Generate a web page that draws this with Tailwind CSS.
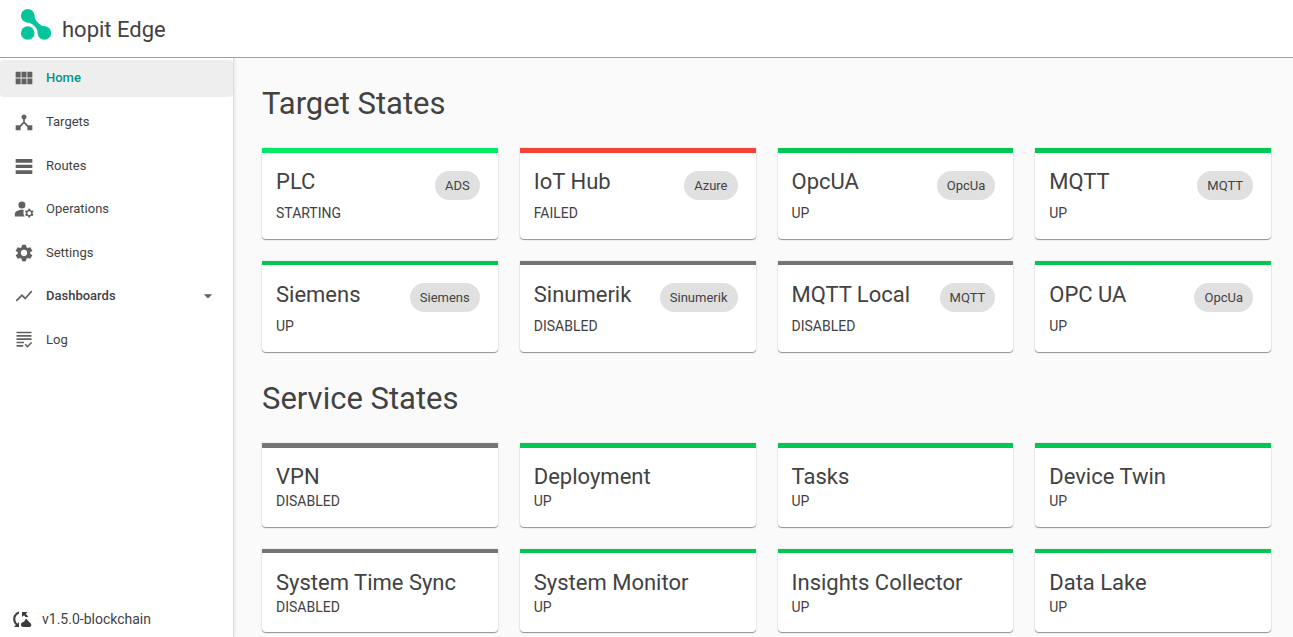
<!DOCTYPE html>
<html lang="en">
<head>
  <meta charset="UTF-8">
  <meta name="viewport" content="width=device-width, initial-scale=1.0">
  <title>hopit Edge</title>
  <script src="https://cdn.jsdelivr.net/npm/@tailwindcss/browser@4"></script>
</head>
<body class="flex min-h-screen flex-col bg-[#fafafa] font-[Roboto,sans-serif] text-[#424242]">
  <header class="relative z-10 flex h-[58px] shrink-0 items-center gap-[10px] border-b border-[#a0a0a0] bg-white pl-5">
    <svg class="mb-2 size-8 shrink-0" viewBox="0 0 32 32" fill="#06c59c" aria-hidden="true">
      <circle cx="7.7" cy="6.8" r="6.8"/>
      <circle cx="7.7" cy="24" r="6.8"/>
      <circle cx="24.4" cy="24" r="6.8"/>
      <path d="M14.4 5.9C14.4 10.9 17.5 13.200 20.2 15.400C22 16.900 23.5 17.200 25.5 17.300L18 25.400C17.8 21.900 17 19.900 14.8 17.500C12.4 15 10.8 13.700 6.5 13.500Z"/>
    </svg>
    <span class="pt-[2px] text-[22px]">hopit Edge</span>
  </header>

  <div class="flex grow">
    <aside class="flex w-[234px] shrink-0 flex-col border-r border-[#dcdcdc] bg-white shadow-[1px_0_3px_rgba(0,0,0,0.08)]">
      <nav class="flex flex-col gap-[7px] pt-[2px] text-[13px]">
        <a href="#" class="flex h-[37px] items-center gap-3 rounded bg-[#eeeeee] pb-[2px] pl-[14px] font-medium text-[#009688]" aria-current="page">
          <svg class="size-5 shrink-0" viewBox="0 0 24 24" fill="#616161"><path d="M2 4.500h6v7H2zM9 4.500h6v7H9zM16 4.500h6v7h-6zM2 12.500h6v7H2zM9 12.500h6v7H9zM16 12.500h6v7h-6z"/></svg>
          Home
        </a>
        <a href="#" class="flex h-[37px] items-center gap-3 pb-[2px] pl-[14px]">
          <svg class="size-5 shrink-0" viewBox="0 0 24 24" fill="#616161"><path d="M17 16l-4-4V8.82C14.16 8.4 15 7.3 15 6c0-1.66-1.34-3-3-3S9 4.34 9 6c0 1.3.84 2.4 2 2.82V12l-4 4H2v6h6v-4.05l4-4.2 4 4.2V22h6v-6z"/></svg>
          Targets
        </a>
        <a href="#" class="flex h-[37px] items-center gap-3 pb-[2px] pl-[14px]">
          <svg class="size-5 shrink-0" viewBox="0 0 24 24" fill="#616161"><path d="M2 3.500h20v4.500H2zM2 10.500h20v4H2zM2 17h20v4.500H2z"/></svg>
          Routes
        </a>
        <a href="#" class="flex h-[37px] items-center gap-3 pb-[3px] pl-[14px]">
          <svg class="size-5 shrink-0" viewBox="0 0 24 24" fill="#616161"><circle cx="9.5" cy="7.3" r="4.2"/><path d="M11.8 13.1C10.9 13 10.2 13 9.5 13c-2.4 0-4.700.7-6.600 1.800C1.700 15.500 1 16.800 1 18.200V21h11.700c-1.600-2.300-1.700-5.300-.900-7.900z"/><path fill-rule="evenodd" d="M22.300 17c0-.2 0-.4-.1-.6l1.200-1-1.100-1.900-1.500.5c-.3-.3-.7-.5-1.100-.7L19.400 11.800h-2.200l-.3 1.500c-.4.2-.8.4-1.100.700l-1.500-.5-1.100 1.900 1.200 1c0 .2-.1.4-.1.600s0 .4.100.600l-1.200 1 1.100 1.900 1.500-.5c.3.3.7.5 1.100.700l.3 1.500h2.200l.3-1.500c.4-.2.8-.4 1.100-.700l1.500.5 1.100-1.900-1.200-1c.1-.2.1-.4.100-.600zm-4 2.200a2.200 2.200 0 1 1 0-4.400 2.200 2.200 0 0 1 0 4.400z"/></svg>
          Operations
        </a>
        <a href="#" class="flex h-[37px] items-center gap-3 pb-[3px] pl-[14px]">
          <svg class="size-5 shrink-0" viewBox="0 0 24 24" fill="#616161"><path d="M19.430 12.980c.040-.320.070-.640.070-.980s-.030-.660-.070-.980l2.610-1.650-2.500-4.330-2.990 1c-.520-.400-1.080-.730-1.690-.980L14.400 2h-4.800l-.460 3.060c-.610.250-1.170.590-1.690.980l-2.990-1-2.500 4.330 2.610 1.650c-.040.320-.070.650-.070.980s.030.660.070.980l-2.610 1.650 2.500 4.330 2.990-1c.520.400 1.080.730 1.690.980L9.600 22h4.800l.460-3.060c.610-.250 1.170-.590 1.690-.980l2.990 1 2.500-4.330zM12 15.800a3.800 3.800 0 1 1 0-7.600 3.800 3.800 0 0 1 0 7.600z"/></svg>
          Settings
        </a>
        <button type="button" class="flex h-[35px] items-center gap-3 pr-[15px] pb-[3px] pl-[14px] font-medium" aria-expanded="false">
          <svg class="size-5 shrink-0" viewBox="0 0 24 24" fill="#616161"><path d="M3.500 18.490l6-6.010 4 4L22 6.920l-1.410-1.410-7.090 7.970-4-4L2 16.990z"/></svg>
          Dashboards
          <svg class="ml-auto size-5" viewBox="0 0 24 24" fill="#616161"><path d="M7 10l5 5 5-5z"/></svg>
        </button>
        <a href="#" class="flex h-[37px] items-center gap-3 pb-[2px] pl-[14px]">
          <svg class="size-5 shrink-0" viewBox="0 0 24 24" fill="#616161"><path d="M3 2h18v2H3zM3 6h18v2H3zM3 10h18v2H3zM3 14h9v2H3zM3 18h8v2H3zM20.500 14.300l1.300 1.300-5.600 5.600-3.500-3.500 1.300-1.300 2.200 2.200z"/></svg>
          Log
        </a>
      </nav>
      <div class="mt-auto flex h-9 items-center gap-[10px] pl-3 text-[14px]">
        <svg class="size-5 shrink-0" viewBox="0 0 20 20" fill="#3c3c3c" aria-hidden="true">
          <path d="M7 2.500v2C4.700 5.500 3.300 7.500 3.300 10c0 1.900.8 3.500 2 4.700L7 13v5H2l1.900-1.900C2.200 14.600 1.200 12.400 1.200 10 1.200 6.300 3.600 3.600 7 2.500zM10 3h5.500l-1.700 1.700L16.500 8h-3l-1.400-1.700L10 8z"/>
          <path d="M11.200 18a2.400 2.400 0 0 1-.6-4.700L12.200 12.600 14 9.500l2.500 2.700 1.800 1.800A2.200 2.200 0 0 1 17.600 18z"/>
        </svg>
        v1.5.0-blockchain
      </div>
    </aside>

    <main class="min-w-0 grow pt-7 pr-[22px] pl-7">
      <h1 class="mb-[26px] text-[31px] leading-9">Target States</h1>
      <section class="grid grid-cols-4 gap-[22px]">
        <article class="flex items-start justify-between rounded-b border-t-5 border-[#00e963] bg-white pt-[14px] pr-[18px] pb-4 pl-[14px] shadow-[0_1px_1px_rgba(0,0,0,0.4),0_0_2px_rgba(0,0,0,0.12)]">
          <div>
            <h2 class="text-[22px] leading-[30px]">PLC</h2>
            <p class="mt-[6px] text-[14px] leading-5">STARTING</p>
          </div>
          <span class="mt-1 rounded-full bg-[#e0e0e0] px-[10px] text-[13px] leading-[29px]">ADS</span>
        </article>
        <article class="flex items-start justify-between rounded-b border-t-5 border-[#f44336] bg-white pt-[14px] pr-[18px] pb-4 pl-[14px] shadow-[0_1px_1px_rgba(0,0,0,0.4),0_0_2px_rgba(0,0,0,0.12)]">
          <div>
            <h2 class="text-[22px] leading-[30px]">IoT Hub</h2>
            <p class="mt-[6px] text-[14px] leading-5">FAILED</p>
          </div>
          <span class="mt-1 rounded-full bg-[#e0e0e0] px-[10px] text-[13px] leading-[29px]">Azure</span>
        </article>
        <article class="flex items-start justify-between rounded-b border-t-5 border-[#00c853] bg-white pt-[14px] pr-[18px] pb-4 pl-[14px] shadow-[0_1px_1px_rgba(0,0,0,0.4),0_0_2px_rgba(0,0,0,0.12)]">
          <div>
            <h2 class="text-[22px] leading-[30px]">OpcUA</h2>
            <p class="mt-[6px] text-[14px] leading-5">UP</p>
          </div>
          <span class="mt-1 rounded-full bg-[#e0e0e0] px-[10px] text-[13px] leading-[29px]">OpcUa</span>
        </article>
        <article class="flex items-start justify-between rounded-b border-t-5 border-[#00c853] bg-white pt-[14px] pr-[18px] pb-4 pl-[14px] shadow-[0_1px_1px_rgba(0,0,0,0.4),0_0_2px_rgba(0,0,0,0.12)]">
          <div>
            <h2 class="text-[22px] leading-[30px]">MQTT</h2>
            <p class="mt-[6px] text-[14px] leading-5">UP</p>
          </div>
          <span class="mt-1 rounded-full bg-[#e0e0e0] px-[10px] text-[13px] leading-[29px]">MQTT</span>
        </article>
        <article class="flex items-start justify-between rounded-b border-t-4 border-[#00c853] bg-white pt-[15px] pr-[18px] pb-4 pl-[14px] shadow-[0_1px_1px_rgba(0,0,0,0.4),0_0_2px_rgba(0,0,0,0.12)]">
          <div>
            <h2 class="text-[22px] leading-[30px]">Siemens</h2>
            <p class="mt-[6px] text-[14px] leading-5">UP</p>
          </div>
          <span class="mt-[3px] rounded-full bg-[#e0e0e0] px-[10px] text-[13px] leading-[29px]">Siemens</span>
        </article>
        <article class="flex items-start justify-between rounded-b border-t-4 border-[#757575] bg-white pt-[15px] pr-[18px] pb-4 pl-[14px] shadow-[0_1px_1px_rgba(0,0,0,0.4),0_0_2px_rgba(0,0,0,0.12)]">
          <div>
            <h2 class="text-[22px] leading-[30px]">Sinumerik</h2>
            <p class="mt-[6px] text-[14px] leading-5">DISABLED</p>
          </div>
          <span class="mt-[3px] rounded-full bg-[#e0e0e0] px-[10px] text-[13px] leading-[29px]">Sinumerik</span>
        </article>
        <article class="flex items-start justify-between rounded-b border-t-4 border-[#757575] bg-white pt-[15px] pr-[18px] pb-4 pl-[14px] shadow-[0_1px_1px_rgba(0,0,0,0.4),0_0_2px_rgba(0,0,0,0.12)]">
          <div>
            <h2 class="text-[22px] leading-[30px]">MQTT Local</h2>
            <p class="mt-[6px] text-[14px] leading-5">DISABLED</p>
          </div>
          <span class="mt-[3px] rounded-full bg-[#e0e0e0] px-[10px] text-[13px] leading-[29px]">MQTT</span>
        </article>
        <article class="flex items-start justify-between rounded-b border-t-4 border-[#00c853] bg-white pt-[15px] pr-[18px] pb-4 pl-[14px] shadow-[0_1px_1px_rgba(0,0,0,0.4),0_0_2px_rgba(0,0,0,0.12)]">
          <div>
            <h2 class="text-[22px] leading-[30px]">OPC UA</h2>
            <p class="mt-[6px] text-[14px] leading-5">UP</p>
          </div>
          <span class="mt-[3px] rounded-full bg-[#e0e0e0] px-[10px] text-[13px] leading-[29px]">OpcUa</span>
        </article>
      </section>

      <h1 class="mt-[29px] mb-[26px] text-[31px] leading-9">Service States</h1>
      <section class="grid grid-cols-4 gap-[22px]">
        <article class="rounded-b border-t-5 border-[#757575] bg-white px-[14px] pt-[14px] pb-4 shadow-[0_1px_1px_rgba(0,0,0,0.4),0_0_2px_rgba(0,0,0,0.12)]">
          <h2 class="text-[22px] leading-[29px]">VPN</h2>
          <p class="text-[14px] leading-5">DISABLED</p>
        </article>
        <article class="rounded-b border-t-5 border-[#00c853] bg-white px-[14px] pt-[14px] pb-4 shadow-[0_1px_1px_rgba(0,0,0,0.4),0_0_2px_rgba(0,0,0,0.12)]">
          <h2 class="text-[22px] leading-[29px]">Deployment</h2>
          <p class="text-[14px] leading-5">UP</p>
        </article>
        <article class="rounded-b border-t-5 border-[#00c853] bg-white px-[14px] pt-[14px] pb-4 shadow-[0_1px_1px_rgba(0,0,0,0.4),0_0_2px_rgba(0,0,0,0.12)]">
          <h2 class="text-[22px] leading-[29px]">Tasks</h2>
          <p class="text-[14px] leading-5">UP</p>
        </article>
        <article class="rounded-b border-t-5 border-[#00c853] bg-white px-[14px] pt-[14px] pb-4 shadow-[0_1px_1px_rgba(0,0,0,0.4),0_0_2px_rgba(0,0,0,0.12)]">
          <h2 class="text-[22px] leading-[29px]">Device Twin</h2>
          <p class="text-[14px] leading-5">UP</p>
        </article>
        <article class="rounded-b border-t-4 border-[#757575] bg-white px-[14px] pt-[15px] pb-[15px] shadow-[0_1px_1px_rgba(0,0,0,0.4),0_0_2px_rgba(0,0,0,0.12)]">
          <h2 class="text-[22px] leading-[29px]">System Time Sync</h2>
          <p class="text-[14px] leading-5">DISABLED</p>
        </article>
        <article class="rounded-b border-t-4 border-[#00c853] bg-white px-[14px] pt-[15px] pb-[15px] shadow-[0_1px_1px_rgba(0,0,0,0.4),0_0_2px_rgba(0,0,0,0.12)]">
          <h2 class="text-[22px] leading-[29px]">System Monitor</h2>
          <p class="text-[14px] leading-5">UP</p>
        </article>
        <article class="rounded-b border-t-4 border-[#00c853] bg-white px-[14px] pt-[15px] pb-[15px] shadow-[0_1px_1px_rgba(0,0,0,0.4),0_0_2px_rgba(0,0,0,0.12)]">
          <h2 class="text-[22px] leading-[29px]">Insights Collector</h2>
          <p class="text-[14px] leading-5">UP</p>
        </article>
        <article class="rounded-b border-t-4 border-[#00c853] bg-white px-[14px] pt-[15px] pb-[15px] shadow-[0_1px_1px_rgba(0,0,0,0.4),0_0_2px_rgba(0,0,0,0.12)]">
          <h2 class="text-[22px] leading-[29px]">Data Lake</h2>
          <p class="text-[14px] leading-5">UP</p>
        </article>
      </section>
    </main>
  </div>
</body>
</html>
